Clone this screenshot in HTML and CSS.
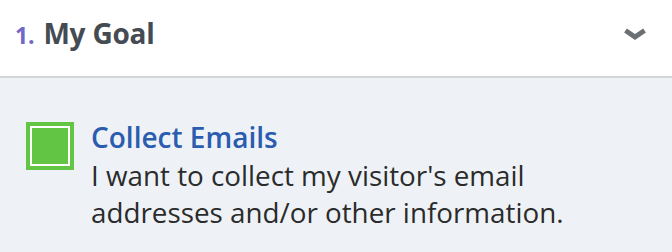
FILE: index.html
```html
<!DOCTYPE html>
<html lang="en">
<head>
    <meta charset="UTF-8">
    <meta name="viewport" content="width=device-width, initial-scale=1.0">
    <title>My Goal</title>
    <link rel="stylesheet" href="styles.css">
</head>
<body>
    <div class="step">
        <header class="step-header">
            <h1><span class="step-num">1.</span> My Goal</h1>
            <svg class="chevron" width="24" height="14" viewBox="0 0 24 14">
                <path d="M2.5 3.5 L12 10 L21.5 3.5" fill="none" stroke="#6b7075" stroke-width="5"/>
            </svg>
        </header>

        <div class="step-body">
            <div class="goal">
                <div class="goal-check"></div>
                <div class="goal-text">
                    <h2>Collect Emails</h2>
                    <p>I want to collect my visitor's email addresses and/or other information.</p>
                </div>
            </div>
        </div>
    </div>
</body>
</html>
```

FILE: styles.css
```css
body {
    font-family: "Open Sans", Arial, sans-serif;
    background-color: #eef2f6;
    margin: 0;
    padding: 0;
}

.step-header {
    display: flex;
    justify-content: space-between;
    align-items: flex-start;
    box-sizing: border-box;
    height: 78px;
    padding: 14px 25px 0 15px;
    background-color: white;
    border-bottom: 2px solid #d2d5d8;
}

.step-header h1 {
    margin: 0;
    font-size: 28px;
    font-weight: 700;
    line-height: 38px;
    color: #454b53;
    letter-spacing: -0.2px;
}

.step-num {
    margin-right: 2px;
    font-size: 23px;
    font-weight: 700;
    color: #7367c7;
}

.chevron {
    margin-top: 13px;
}

.step-body {
    padding: 39px 20px 0 26px;
}

.goal {
    display: flex;
    align-items: flex-start;
    gap: 17px;
}

.goal-check {
    flex: none;
    width: 48px;
    height: 48px;
    margin-top: 5px;
    box-sizing: border-box;
    background-color: #62c544;
    border: 4px solid #62c544;
    box-shadow: inset 0 0 0 2px white;
}

.goal-text h2 {
    margin: 0;
    font-size: 28px;
    font-weight: 600;
    line-height: 40px;
    color: #2b5cb0;
}

.goal-text p {
    margin: 0;
    max-width: 480px;
    font-size: 27.8px;
    line-height: 37px;
    color: #2b2b2b;
}
```
